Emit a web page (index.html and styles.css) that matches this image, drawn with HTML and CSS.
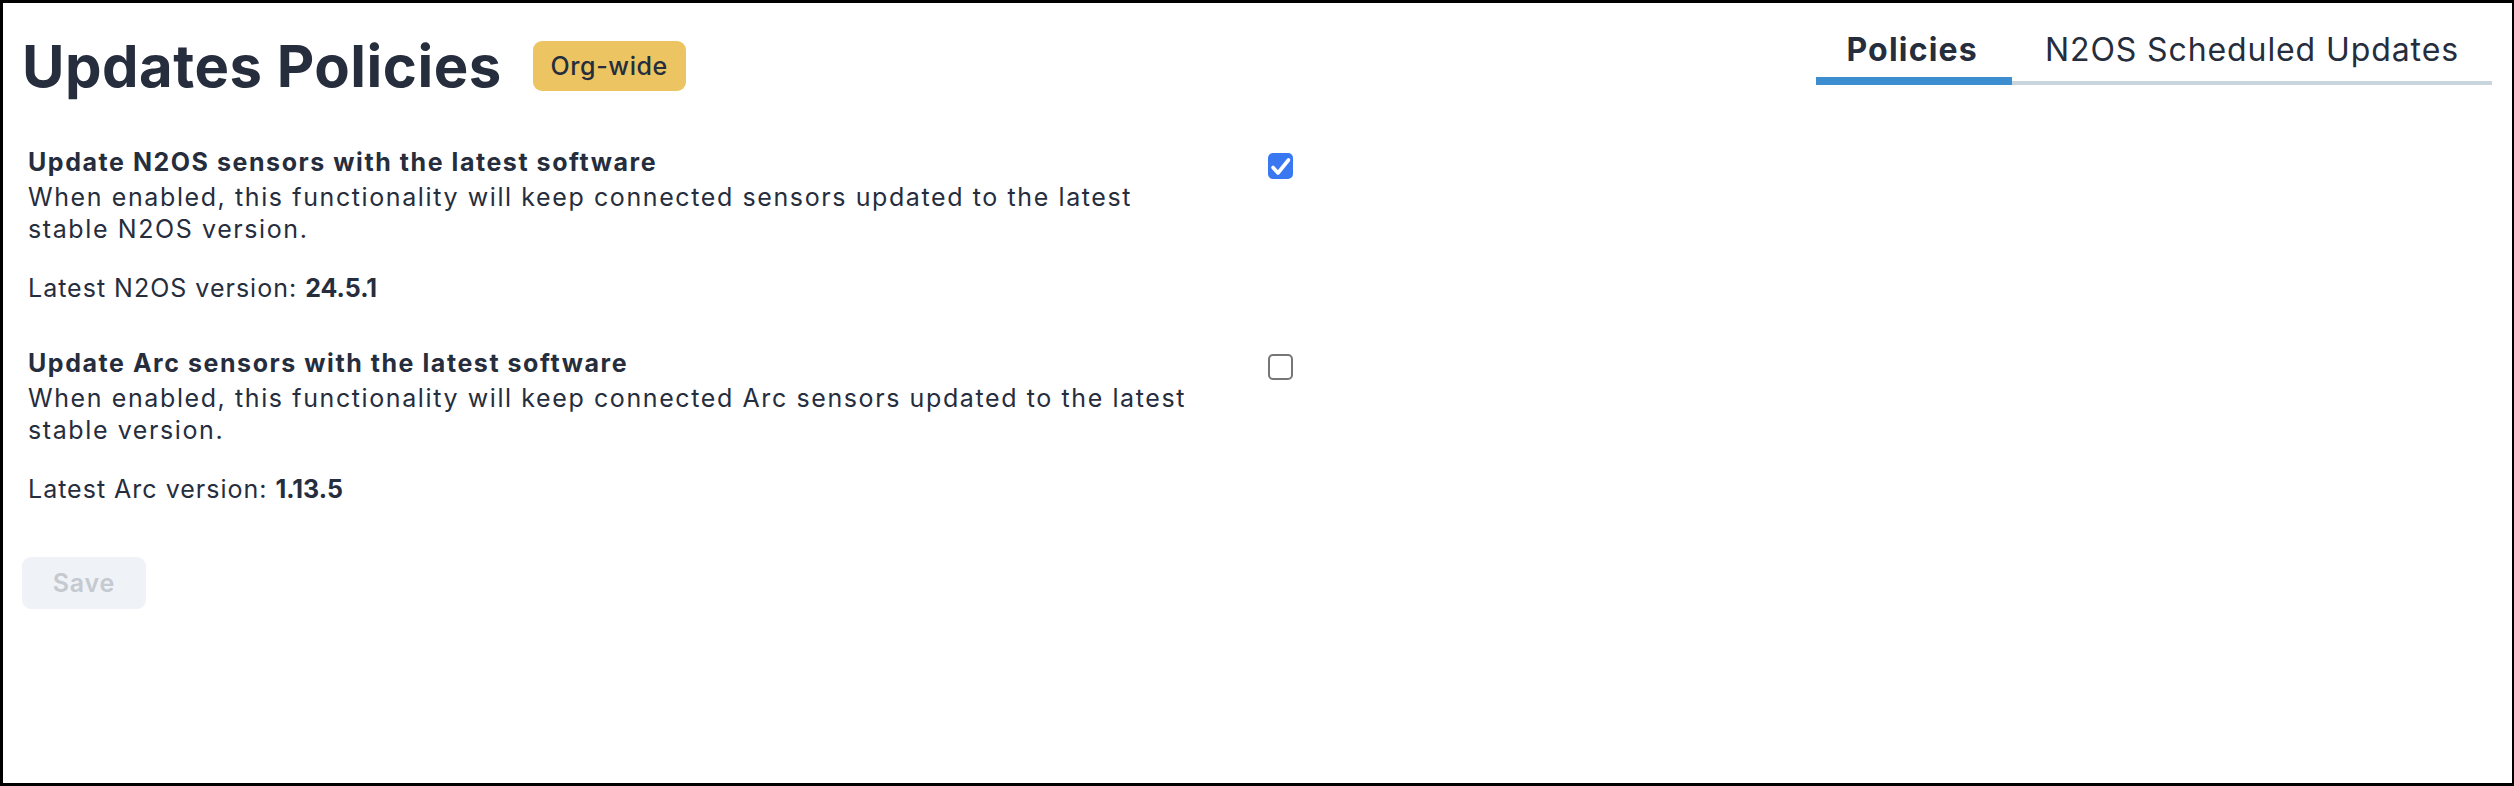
FILE: index.html
```html
<!DOCTYPE html>
<html lang="en">
<head>
<meta charset="utf-8">
<title>Updates Policies</title>
<link rel="stylesheet" href="styles.css">
</head>
<body>
<div class="frame">
  <header class="top">
    <div class="title-group">
      <h1 class="page-title">Updates Policies</h1>
      <span class="badge">Org-wide</span>
    </div>
    <nav class="tabs">
      <a class="tab tab-active">Policies</a>
      <a class="tab">N2OS Scheduled Updates</a>
    </nav>
  </header>

  <section class="policies">
    <div class="policy">
      <div class="policy-text">
        <div class="policy-title">Update N2OS sensors with the latest software</div>
        <p class="policy-desc">When enabled, this functionality will keep connected sensors updated to the latest stable N2OS version.</p>
        <p class="policy-version">Latest N2OS version: <b>24.5.1</b></p>
      </div>
      <span class="checkbox checkbox-on">
        <svg viewBox="0 0 25 25" width="25" height="25"><path d="M5 13.5 L10 19 L20.5 6" fill="none" stroke="#fff" stroke-width="3.6" stroke-linecap="round" stroke-linejoin="round"/></svg>
      </span>
    </div>

    <div class="policy">
      <div class="policy-text">
        <div class="policy-title">Update Arc sensors with the latest software</div>
        <p class="policy-desc">When enabled, this functionality will keep connected Arc sensors updated to the latest stable version.</p>
        <p class="policy-version">Latest Arc version: <b>1.13.5</b></p>
      </div>
      <span class="checkbox"></span>
    </div>
  </section>

  <button class="save" disabled>Save</button>
</div>
</body>
</html>
```

FILE: styles.css
```css
* { box-sizing: border-box; }

html, body {
  margin: 0;
  padding: 0;
  background: #fff;
}

body {
  font-family: "Inter", "Open Sans", sans-serif;
  color: #262d3d;
}

.frame {
  width: 2514px;
  height: 786px;
  border-style: solid;
  border-color: #000;
  border-width: 3px 2px 3px 3px;
  padding: 0 20px 0 19px;
}

.top {
  display: flex;
  justify-content: space-between;
  align-items: flex-start;
}

.title-group {
  display: flex;
  align-items: center;
  gap: 31px;
  margin-top: 38px;
  height: 50px;
}

.page-title {
  margin: 0;
  font-size: 58px;
  font-weight: 700;
  line-height: 50px;
  letter-spacing: 0.5px;
  color: #262d3d;
}

.badge {
  display: inline-flex;
  align-items: center;
  justify-content: center;
  width: 153px;
  height: 50px;
  border-radius: 9px;
  background: #ecc462;
  font-size: 25px;
  font-weight: 500;
  letter-spacing: 0.6px;
  color: #262d3d;
}

.tabs {
  display: flex;
  margin-top: 26px;
  box-shadow: inset 0 -4px 0 #c8d5dd;
}

.tab {
  display: block;
  padding: 0 33px 14px 33px;
  font-size: 32px;
  line-height: 42px;
  font-weight: 400;
  letter-spacing: 0.9px;
  color: #262d3d;
  cursor: pointer;
}

.tab-active {
  font-weight: 700;
  letter-spacing: 1.2px;
  padding-left: 30px;
  padding-right: 34px;
  box-shadow: inset 0 -8px 0 #3d8ed0;
}

.policies {
  padding: 55px 0 0 6px;
}

.policy {
  display: flex;
  align-items: flex-start;
  gap: 55px;
}

.policy + .policy {
  margin-top: 43px;
}

.policy-text {
  width: 1185px;
  font-size: 25px;
  line-height: 32px;
  letter-spacing: 1.6px;
}

.policy-title {
  font-size: 25px;
  font-weight: 700;
  letter-spacing: 1.55px;
  margin-bottom: 3px;
}

.policy-desc {
  margin: 0;
}

.policy-version {
  margin: 27px 0 0 0;
  letter-spacing: 1px;
}

.policy-version b {
  font-weight: 700;
  letter-spacing: 0;
}

.checkbox {
  flex: none;
  width: 25px;
  height: 26px;
  margin-top: 7px;
  border: 2px solid #767676;
  border-radius: 5px;
  background: #fff;
  display: flex;
  align-items: center;
  justify-content: center;
}

.checkbox svg {
  display: block;
}

.checkbox-on {
  border: none;
  background: #3a78f2;
}

.save {
  display: block;
  margin-top: 52px;
  width: 124px;
  height: 52px;
  border: none;
  border-radius: 9px;
  background: #eff3f7;
  color: #c5c9d0;
  font-family: inherit;
  font-size: 25px;
  font-weight: 600;
  letter-spacing: 0.8px;
  padding: 0;
}
```
